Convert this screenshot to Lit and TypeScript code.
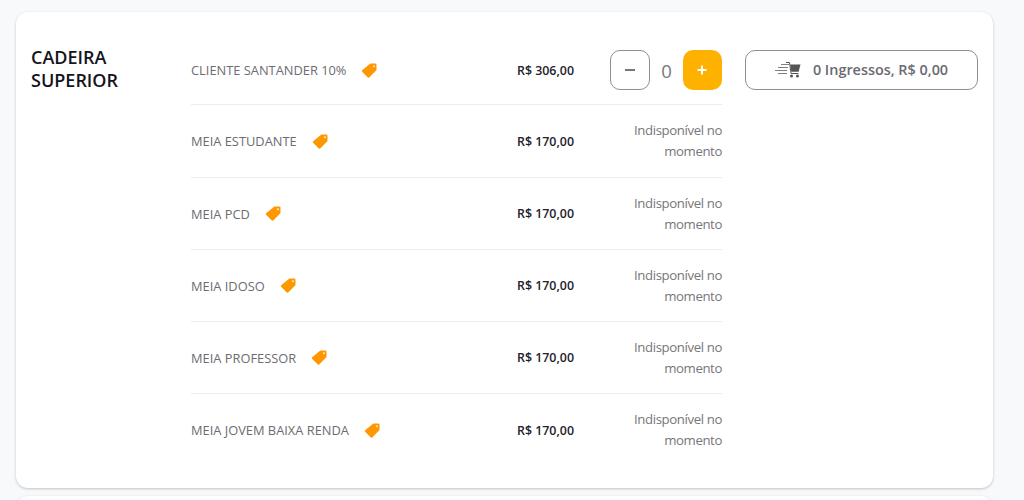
import { LitElement, html, css, svg } from "lit";
import { customElement } from "lit/decorators.js";

const tag = svg`<svg class="tag" width="17" height="17" viewBox="0 0 17 17"><path fill="#ff9800" d="M9.6 1.6h5a.9.9 0 0 1 .9.9v5a1.2 1.2 0 0 1-.4.9l-6.9 7a1 1 0 0 1-1.4 0L1.1 9.7a1 1 0 0 1 0-1.4l7.6-6.3a1.4 1.4 0 0 1 .9-.4Z"/><circle cx="12.9" cy="4.2" r="1" fill="#ffe9c9"/></svg>`;

const cart = svg`<svg class="cart" width="26" height="17" viewBox="0 0 26 17"><g fill="none" stroke="#808080" stroke-width="1"><path d="M6 3.5h8M3 6.5h10M0 9.5h12M3 12.5h9"/><path d="M11 1.5h3.5l1.6 11h7.4" stroke="#555"/></g><path fill="#555" d="M15.2 3.5H25.5L23.6 10.8H16.3Z"/><circle cx="16.5" cy="15" r="1.5" fill="#555"/><circle cx="22.5" cy="15" r="1.5" fill="#555"/></svg>`;

const rows = [
  { name: "MEIA ESTUDANTE", price: "R$ 170,00" },
  { name: "MEIA PCD", price: "R$ 170,00" },
  { name: "MEIA IDOSO", price: "R$ 170,00" },
  { name: "MEIA PROFESSOR", price: "R$ 170,00" },
  { name: "MEIA JOVEM BAIXA RENDA", price: "R$ 170,00" },
];

@customElement("app-root")
export class AppRoot extends LitElement {
  static styles = css`
    :host {
      display: block;
      height: 500px;
      overflow: hidden;
      background: #f8f9fb;
      font-family: "Open Sans", "Noto Sans", sans-serif;
      padding: 12px 31px 0 16px;
      box-sizing: border-box;
    }
    .card {
      background: #fff;
      border-radius: 12px;
      box-shadow: 0 1px 3px rgba(0, 0, 0, 0.22);
      box-sizing: border-box;
      display: flex;
      padding: 23px 15px 0;
    }
    .main {
      height: 476px;
    }
    .next {
      height: 40px;
      margin-top: 8px;
    }
    .title {
      width: 160px;
      margin: 11px 0 0;
      font-size: 18px;
      line-height: 23px;
      font-weight: 600;
      color: #14141c;
      flex: none;
    }
    .table {
      width: 531px;
      flex: none;
    }
    .row {
      display: flex;
      align-items: center;
      height: 72px;
      border-bottom: 1px solid #ececec;
      box-sizing: border-box;
    }
    .row:first-child {
      height: 70px;
      padding-top: 1px;
    }
    .row:nth-child(2) {
      height: 73px;
    }
    .row:last-child {
      border-bottom: none;
    }
    .name {
      flex: 1;
      display: flex;
      align-items: center;
      gap: 15px;
      font-size: 12.85px;
      color: #6c6c72;
      white-space: nowrap;
    }
    .tag {
      flex: none;
    }
    .price {
      width: 150px;
      flex: none;
      margin-right: 148px;
      text-align: right;
      font-size: 12.4px;
      font-weight: 600;
      color: #22222a;
      white-space: nowrap;
    }
    .row .status {
      width: 112px;
      flex: none;
      margin-left: -112px;
      text-align: right;
      font-size: 13.2px;
      letter-spacing: -0.38px;
      line-height: 21px;
      color: #76767a;
    }
    .qty {
      width: 112px;
      flex: none;
      margin-left: -112px;
      display: flex;
      align-items: center;
      justify-content: space-between;
    }
    .btn {
      width: 40px;
      height: 40px;
      box-sizing: border-box;
      border-radius: 10px;
      display: flex;
      align-items: center;
      justify-content: center;
      background: #fff;
      border: 1px solid #8f8f8f;
    }
    .btn.plus {
      width: 39px;
      background: #ffb100;
      border: none;
    }
    .count {
      font-size: 18.5px;
      color: #77777c;
    }
    .side {
      flex: none;
      margin-left: 23px;
      padding-top: 15px;
    }
    .buy {
      width: 233px;
      height: 40px;
      box-sizing: border-box;
      border: 1px solid #8f8f8f;
      border-radius: 10px;
      display: flex;
      align-items: center;
      justify-content: center;
      gap: 12px;
      padding-bottom: 1px;
      font-size: 14.4px;
      font-weight: 600;
      color: #6a6a70;
      white-space: nowrap;
    }
  `;

  render() {
    return html`
      <div class="card main">
        <h2 class="title">CADEIRA SUPERIOR</h2>
        <div class="table">
          <div class="row">
            <div class="name">CLIENTE SANTANDER 10% ${tag}</div>
            <div class="price">R$ 306,00</div>
            <div class="qty">
              <div class="btn">
                <svg width="12" height="12" viewBox="0 0 12 12"><path d="M1 6h10" stroke="#777" stroke-width="2"/></svg>
              </div>
              <span class="count">0</span>
              <div class="btn plus">
                <svg width="12" height="12" viewBox="0 0 12 12"><path d="M1.5 6h9M6 1.5v9" stroke="#fff" stroke-width="2"/></svg>
              </div>
            </div>
          </div>
          ${rows.map(
            (r) => html`
              <div class="row">
                <div class="name">${r.name} ${tag}</div>
                <div class="price">${r.price}</div>
                <div class="status">Indisponível no momento</div>
              </div>
            `,
          )}
        </div>
        <div class="side">
          <div class="buy">${cart}<span>0 Ingressos, R$ 0,00</span></div>
        </div>
      </div>
      <div class="card next"></div>
    `;
  }
}
